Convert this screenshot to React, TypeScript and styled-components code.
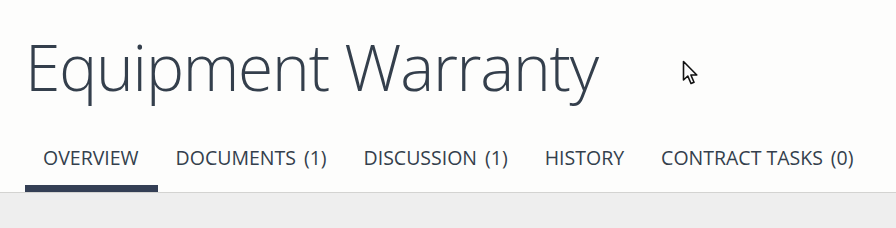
import React from 'react';
import styled, {createGlobalStyle} from 'styled-components';

const GlobalStyle = createGlobalStyle`
    html, body {
        margin: 0;
        padding: 0;
        background: #eeeeee;
    }
    body {
        font-family: "Open Sans", "Noto Sans", sans-serif;
        color: #343f4c;
    }
`

const tabs = [
    {label: 'OVERVIEW', active: true},
    {label: 'DOCUMENTS', count: 1},
    {label: 'DISCUSSION', count: 1},
    {label: 'HISTORY'},
    {label: 'CONTRACT TASKS', count: 0},
]

export default function App() {
    return (
        <>
            <GlobalStyle/>
            <Page>
                <Header>
                    <TitleRow>
                        <Title>Equipment Warranty</Title>
                        <Cursor/>
                    </TitleRow>
                    <Tabs>
                        {tabs.map(t => (
                            <Tab key={t.label} $active={!!t.active}>
                                {t.label}
                                {t.count !== undefined && <Count>({t.count})</Count>}
                            </Tab>
                        ))}
                    </Tabs>
                </Header>
                <Body/>
            </Page>
        </>
    );
}

const Cursor = () => (
    <CursorWrap>
        <svg width="18" height="27" viewBox="0 0 18 27">
            <path d="M1.5 1.5 L1.5 20 L5.8 16 L9 23.5 L12 22.2 L8.9 15 L14.8 15 Z"
                  fill="#fafafa" stroke="#111" strokeWidth="1.6" strokeLinejoin="round"/>
        </svg>
    </CursorWrap>
)

const Page = styled.div`
    width: 896px;
    height: 228px;
    display: flex;
    flex-direction: column;
    overflow: hidden;
`
const Header = styled.header`
    background: #fdfdfc;
    border-bottom: 1px solid #d3d3d1;
`
const TitleRow = styled.div`
    position: relative;
    padding: 27px 0 0 25px;
    height: 104px;
    box-sizing: border-box;
`
const Title = styled.h1`
    margin: 0;
    font-size: 64px;
    font-weight: 300;
    line-height: 80px;
    letter-spacing: -1.2px;
    color: #343f4c;
`
const CursorWrap = styled.div`
    position: absolute;
    left: 682px;
    top: 60px;
`
const Tabs = styled.nav`
    display: flex;
    padding-left: 25px;
    height: 88px;
    box-sizing: border-box;
    align-items: stretch;
    padding-top: 25px;
`
const Tab = styled.div<{ $active: boolean }>`
    display: flex;
    align-items: center;
    padding: 0 19px 0 18px;
    font-size: 19.5px;
    font-weight: 400;
    color: #343f4c;
    border-bottom: 7px solid ${p => p.$active ? '#343f55' : 'transparent'};
`
const Count = styled.span`
    margin-left: 8px;
`
const Body = styled.div`
    flex: 1;
    background: #eeeeee;
`
